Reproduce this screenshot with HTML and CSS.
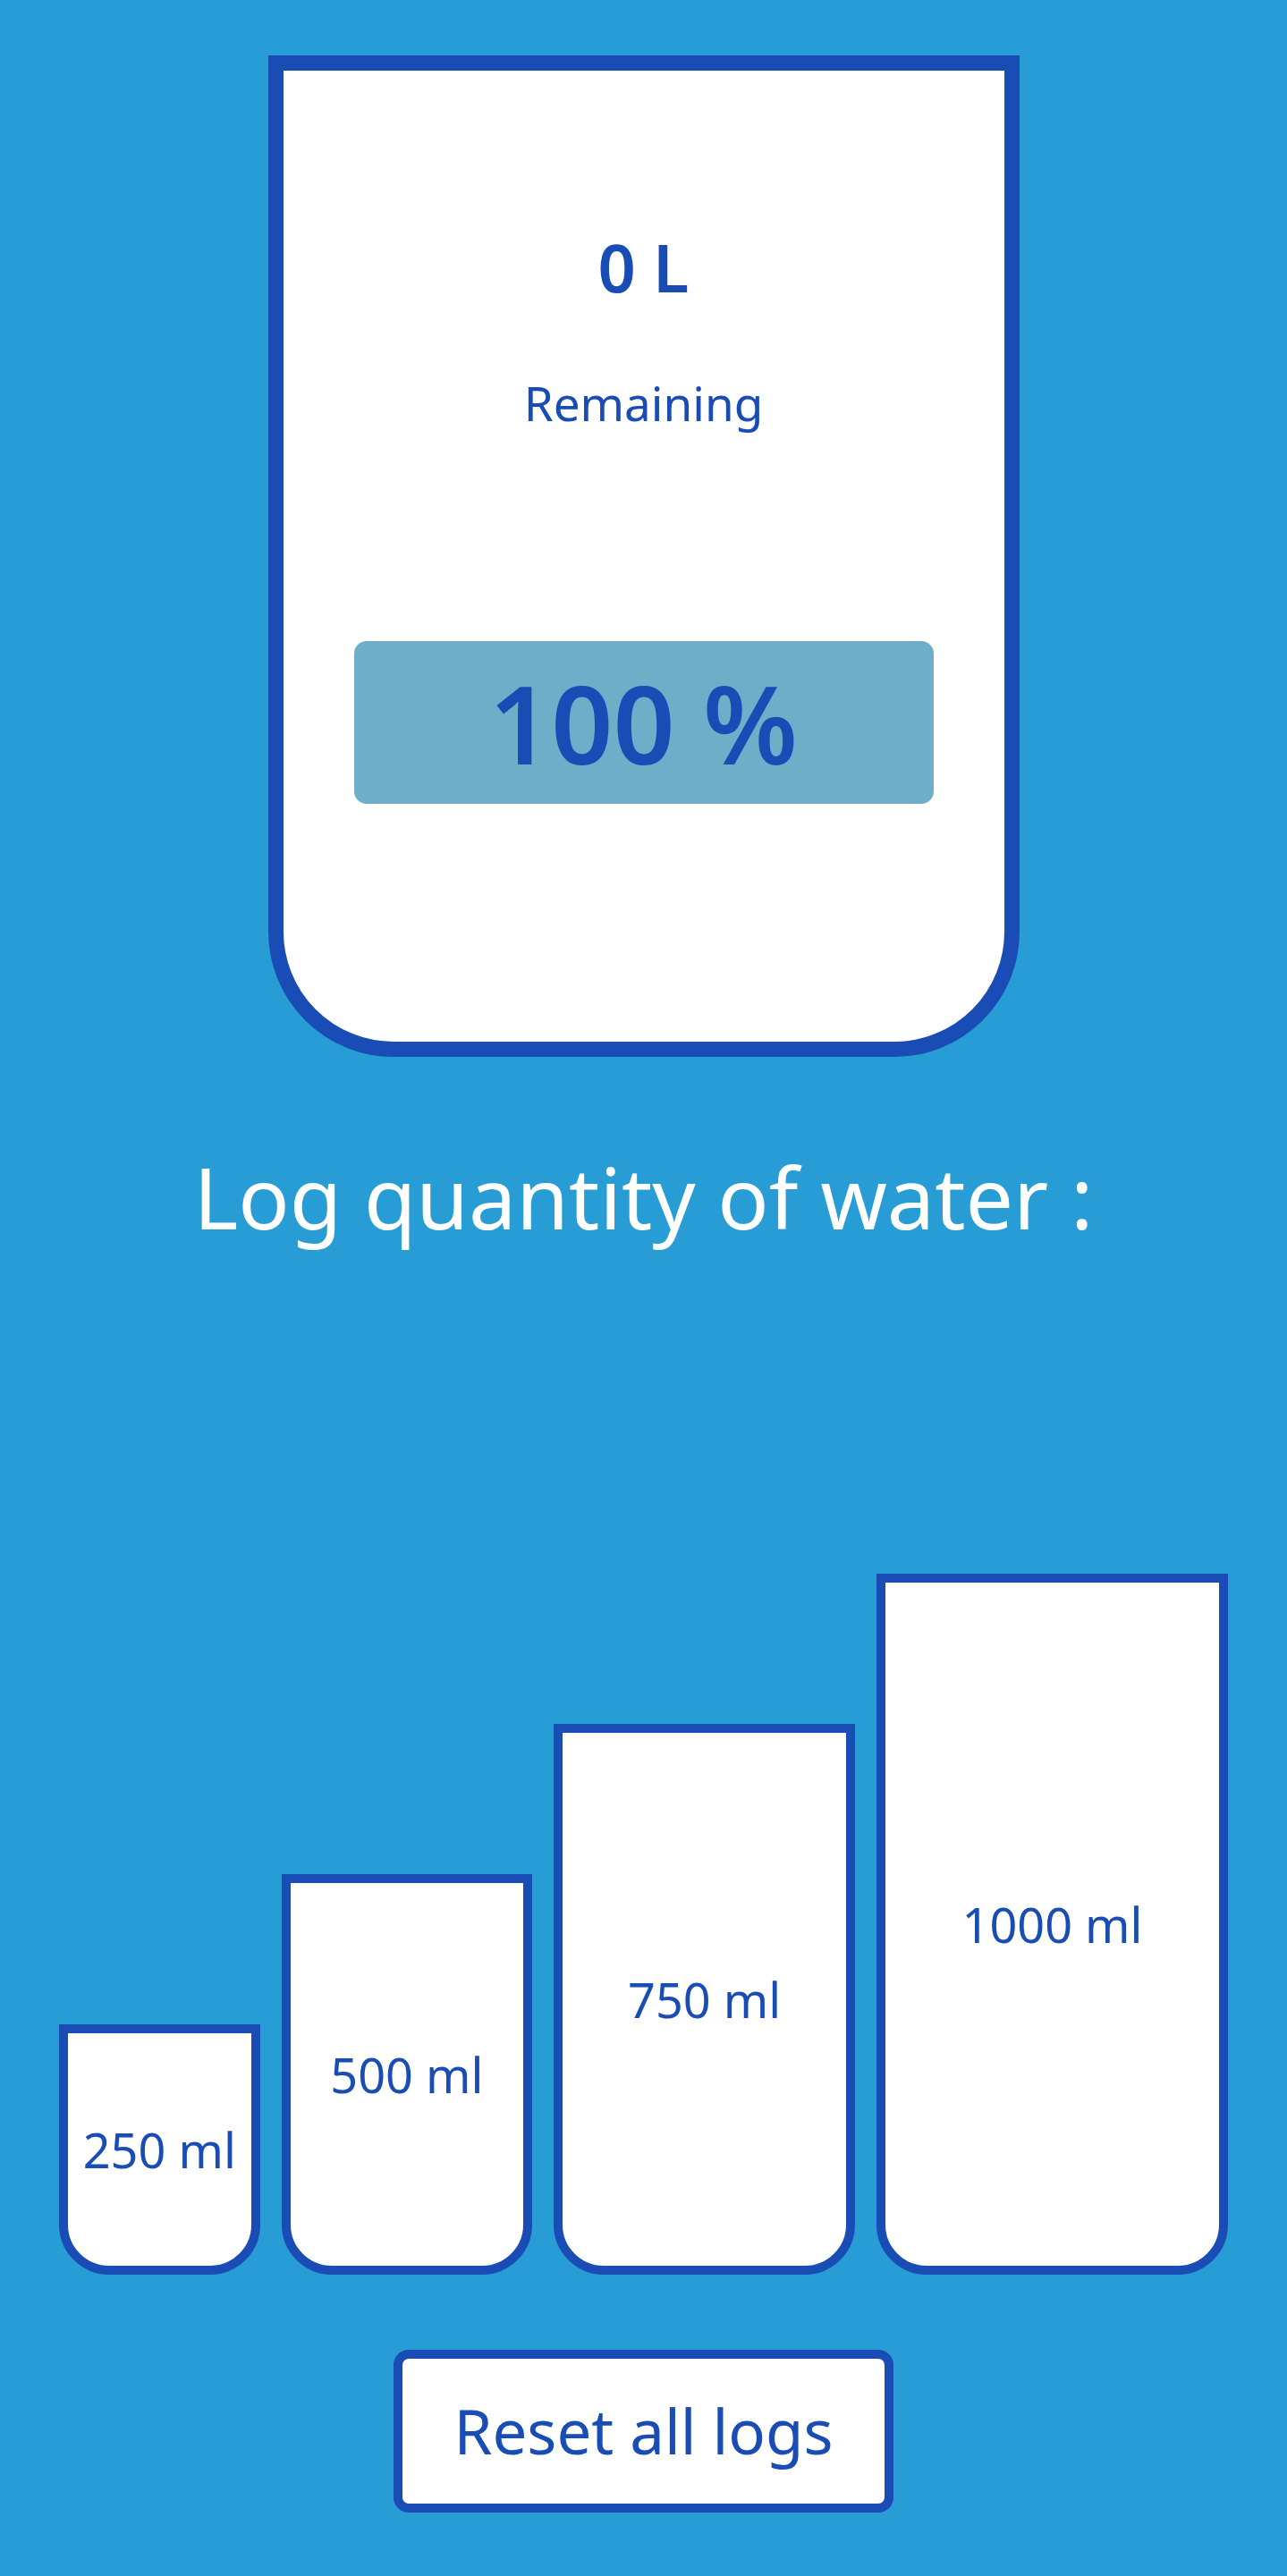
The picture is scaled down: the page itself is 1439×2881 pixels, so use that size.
FILE: index.html
```html
<!DOCTYPE html>
<html lang="en">
<head>
  <meta charset="utf-8">
  <meta name="viewport" content="width=device-width, initial-scale=1">
  <title>Water log</title>
  <link rel="stylesheet" href="styles.css">
</head>
<body>
  <main class="page">
    <section class="glass" aria-label="Daily progress">
      <p class="glass-amount">0 L</p>
      <p class="glass-label">Remaining</p>
      <p class="glass-percent">100 %</p>
    </section>

    <h1 class="heading">Log quantity of water :</h1>

    <div class="cups">
      <button type="button" class="cup cup-250">250 ml</button>
      <button type="button" class="cup cup-500">500 ml</button>
      <button type="button" class="cup cup-750">750 ml</button>
      <button type="button" class="cup cup-1000">1000 ml</button>
    </div>

    <button type="button" class="reset">Reset all logs</button>
  </main>
</body>
</html>
```
FILE: styles.css
```css
:root {
  --water: #289cd4;
  --ink: #194cb5;
  --badge: #6eaec8;
}

* {
  box-sizing: border-box;
}

body {
  margin: 0;
  background: var(--water);
  color: var(--ink);
  font-family: "Noto Sans", "Open Sans", sans-serif;
}

button {
  margin: 0;
  padding: 0;
  background: #fff;
  color: inherit;
  font-family: inherit;
  cursor: pointer;
}

.page {
  display: flex;
  flex-direction: column;
  align-items: center;
  padding: 62px 66px 71px;
}

/* Main glass */
.glass {
  display: flex;
  flex-direction: column;
  align-items: center;
  width: 100%;
  max-width: 840px;
  min-height: 1120px;
  padding: 178px 79px 0;
  background: #fff;
  border: 17px solid var(--ink);
  border-radius: 0 0 140px 140px;
}

.glass-amount,
.glass-label,
.glass-percent {
  margin: 0;
}

.glass-amount {
  font-size: 74px;
  font-weight: 600;
  line-height: 84px;
}

.glass-label {
  margin-top: 80px;
  font-size: 53px;
  line-height: 60px;
}

.glass-percent {
  width: 100%;
  margin-top: 236px;
  background: var(--badge);
  border-radius: 14px;
  font-size: 121px;
  font-weight: 600;
  line-height: 182px;
  text-align: center;
}

.heading {
  margin: 96px 0 0;
  color: #fff;
  font-size: 95px;
  font-weight: 400;
  line-height: 120px;
  text-align: center;
}

/* Cup buttons, each one taller and wider than the last */
.cups {
  display: grid;
  grid-template-columns: 4fr 5fr 6fr 7fr;
  align-items: end;
  gap: 24px;
  width: 100%;
  margin-top: 362px;
}

.cup {
  min-width: 0;
  border: 10px solid var(--ink);
  border-radius: 0 0 56px 56px;
  font-size: 54px;
  line-height: 60px;
}

.cup-250 {
  height: 280px;
}

.cup-500 {
  height: 448px;
}

.cup-750 {
  height: 616px;
}

.cup-1000 {
  height: 784px;
}

.reset {
  margin-top: 84px;
  padding: 35px 58px 37px;
  border: 10px solid var(--ink);
  border-radius: 17px;
  font-size: 69px;
  line-height: 90px;
}
```
